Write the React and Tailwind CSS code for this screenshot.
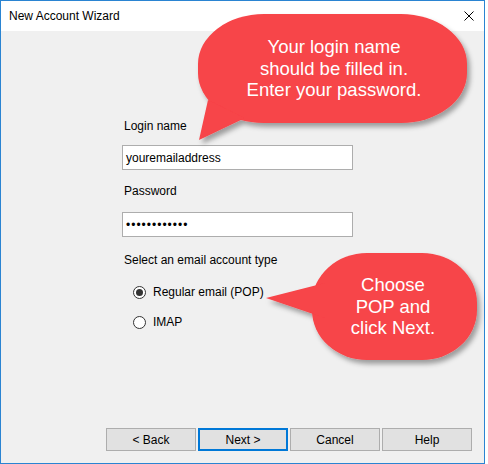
import React from 'react';

function Radio({ checked, label }) {
  return (
    <div className="h-4 flex items-center pl-[11px] gap-[7px]">
      <div className="w-[13px] h-[13px] rounded-full border border-[#333333] bg-white flex items-center justify-center">
        {checked && <div className="w-[7px] h-[7px] rounded-full bg-[#333333]" />}
      </div>
      <span>{label}</span>
    </div>
  );
}

function Button({ children, primary }) {
  return (
    <div
      className={
        'w-[90px] h-[23px] bg-[#e1e1e1] flex items-center justify-center ' +
        (primary ? 'border-2 border-[#0078d7]' : 'border border-[#adadad]')
      }
    >
      {children}
    </div>
  );
}

export default function App() {
  return (
    <div className="relative w-[488px] h-[464px] bg-white font-['Liberation_Sans',Arial,sans-serif] text-[12px] text-black">
      {/* Dialog window */}
      <div className="w-[485px] h-[464px] border border-[#2a84d2] flex flex-col">
        <div className="h-[30px] bg-white flex items-center justify-between pl-2 pr-[10px]">
          <span>New Account Wizard</span>
          <svg width="10" height="10" viewBox="0 0 10 10">
            <path d="M0.5 0.5 L9.5 9.5 M9.5 0.5 L0.5 9.5" stroke="#000" strokeWidth="1" />
          </svg>
        </div>

        <div className="flex-1 bg-[#f0f0f0] flex flex-col">
          <div className="ml-[121px] mt-[87px] w-[231px] flex flex-col">
            <div className="leading-4 pl-[2px]">Login name</div>
            <div className="mt-[11px] h-[25px] border border-[#adadad] bg-white pl-[3px] flex items-center">
              youremailaddress
            </div>
            <div className="mt-[13px] leading-4 pl-[2px]">Password</div>
            <div className="mt-[13px] h-[25px] border border-[#adadad] bg-white pl-[3px] flex items-center tracking-[1px]">
              ••••••••••••
            </div>
            <div className="mt-[15px] leading-4 pl-[2px]">Select an email account type</div>
            <div className="mt-[16px]">
              <Radio checked label="Regular email (POP)" />
            </div>
            <div className="mt-[14px]">
              <Radio label="IMAP" />
            </div>
          </div>

          <div className="flex-1" />

          <div className="flex justify-end gap-[2px] pr-[12px] pb-[12px]">
            <Button>&lt; Back</Button>
            <Button primary>Next &gt;</Button>
            <Button>Cancel</Button>
            <Button>Help</Button>
          </div>
        </div>
      </div>

      {/* Callouts */}
      <svg className="absolute top-0 left-0 pointer-events-none" width="488" height="464">
        <defs>
          <filter id="sh" x="-20%" y="-20%" width="140%" height="150%">
            <feDropShadow dx="3" dy="4" stdDeviation="2.5" floodColor="#000" floodOpacity="0.35" />
          </filter>
        </defs>
        <g filter="url(#sh)" fill="#f74448">
          <path d="M264 14 H401 A66 50 0 0 1 467 64 V73 A66 50 0 0 1 401 123 H264 A66 50 0 0 1 198 73 V64 A66 50 0 0 1 264 14 Z" />
          <polygon points="208,100 199,140 245,118" />
        </g>
        <g filter="url(#sh)" fill="#f74448">
          <path d="M367 253 H422 A55 50 0 0 1 477 303 V310 A55 50 0 0 1 422 360 H367 A55 50 0 0 1 312 310 V303 A55 50 0 0 1 367 253 Z" />
          <polygon points="325,283 266,298 325,318" />
        </g>
      </svg>

      <div className="absolute left-[224px] top-[36px] w-[220px] text-center text-white text-[18.5px] leading-[21.5px]">
        Your login name
        <br />
        should be filled in.
        <br />
        Enter your password.
      </div>

      <div className="absolute left-[333px] top-[274px] w-[120px] text-center text-white text-[18.5px] leading-[21.5px]">
        Choose
        <br />
        POP and
        <br />
        click Next.
      </div>
    </div>
  );
}
